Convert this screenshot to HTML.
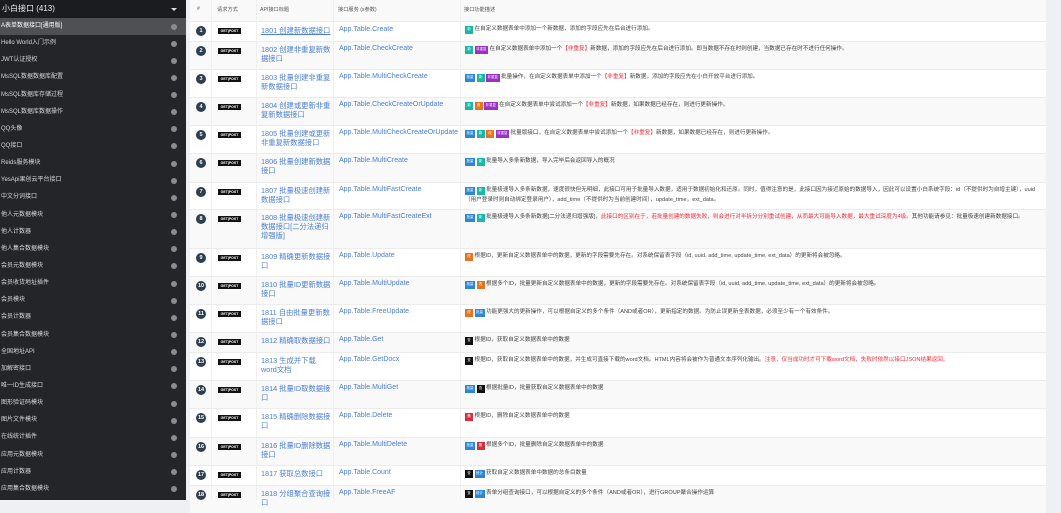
<!DOCTYPE html>
<html><head><meta charset="utf-8">
<style>
*{margin:0;padding:0;box-sizing:border-box}
body{width:1061px;height:500px;overflow:hidden;background:#eef0f3;font-family:"Liberation Sans","Noto Sans CJK SC",sans-serif;position:relative}
#sb{position:absolute;left:0;top:0;width:186px;height:500px;background:#232529;color:#d8d8d8}
#sb .hd{height:18px;background:#1b1c1f;color:#eee;font-size:8px;line-height:18px;padding-left:2px;position:relative}
#sb .hd:after{content:"";position:absolute;right:9px;top:8px;border-left:3px solid transparent;border-right:3px solid transparent;border-top:3px solid #ddd}
#sb .it{height:17.15px;font-size:6px;line-height:17px;padding-left:1px;position:relative;white-space:nowrap}
#sb .it.on{background:#4f5054;color:#fff}
#sb .it i{position:absolute;right:9px;top:5.5px;width:6px;height:6px;border-radius:3px;background:#8a8b8e}
#tb{position:absolute;left:190px;top:0;width:856px;height:500px;background:#fff}
.row{position:absolute;left:0;width:856px;border-top:1px solid #ececec}
.row.a{background:#f9f9f9}
.c{position:absolute;top:0;height:100%;border-left:1px solid #efefef}
.num{position:absolute;left:6px;width:10px;height:10px;border-radius:50%;background:#2c3e50;color:#fff;font-size:5.5px;line-height:10px;text-align:center;font-weight:bold}
.m{position:absolute;left:28px;width:23px;height:6px;background:#111;color:#fff;font-size:3.5px;line-height:6px;text-align:center;font-weight:bold}
.t{position:absolute;left:71px;width:70px;font-size:7.3px;line-height:9px;color:#4a7fd6}
.t.u{text-decoration:underline}
.s{position:absolute;left:149px;font-size:7px;color:#4a7fd6;white-space:nowrap}
.d{position:absolute;left:275px;width:575px;font-size:5.6px;line-height:9.5px;color:#444}
.b{display:inline-block;height:7.5px;min-width:8px;padding:0 1.5px;font-size:3.5px;line-height:7.5px;color:#fff;vertical-align:0;margin-right:1.5px;text-align:center}
.x{background:#1ab6a6}.p{background:#9b30c4}.l{background:#2d86d6}.o{background:#e8731f}.k{background:#111}.r{background:#d82d3c}
.red{color:#f02d3a}
.h{position:absolute;top:6px;font-size:5.2px;color:#555}
</style></head><body>
<div id="sb">
<div class="hd">小白接口 (413)</div>
<div class="it on">A表单数据接口[通用版]<i></i></div>
<div class="it">Hello World入门示例<i></i></div>
<div class="it">JWT认证授权<i></i></div>
<div class="it">MsSQL数据数据库配置<i></i></div>
<div class="it">MsSQL数据库存储过程<i></i></div>
<div class="it">MsSQL数据库数据操作<i></i></div>
<div class="it">QQ头像<i></i></div>
<div class="it">QQ接口<i></i></div>
<div class="it">Reids服务模块<i></i></div>
<div class="it">YesApi果创云平台接口<i></i></div>
<div class="it">中文分词接口<i></i></div>
<div class="it">他人元数据模块<i></i></div>
<div class="it">他人计数器<i></i></div>
<div class="it">他人集合数据模块<i></i></div>
<div class="it">会员元数据模块<i></i></div>
<div class="it">会员收货地址插件<i></i></div>
<div class="it">会员模块<i></i></div>
<div class="it">会员计数器<i></i></div>
<div class="it">会员集合数据模块<i></i></div>
<div class="it">全国地址API<i></i></div>
<div class="it">加解密接口<i></i></div>
<div class="it">唯一ID生成接口<i></i></div>
<div class="it">图形验证码模块<i></i></div>
<div class="it">图片文件模块<i></i></div>
<div class="it">在线统计插件<i></i></div>
<div class="it">应用元数据模块<i></i></div>
<div class="it">应用计数器<i></i></div>
<div class="it">应用集合数据模块<i></i></div>
</div>
<div id="tb">
<div class="row a" style="top:0;height:21px;border-top:none">
<span class="h" style="left:7px">#</span><span class="h" style="left:27px">请求方式</span><span class="h" style="left:70px">API接口标题</span><span class="h" style="left:148px">接口服务 (s参数)</span><span class="h" style="left:274px">接口功能描述</span>
</div>

<div class="row" style="top:21px;height:20px"><div class="num" style="top:4px">1</div><div class="m" style="top:6px">GET|POST</div><div class="t u" style="top:4px">1801 创建新数据接口</div><div class="s" style="top:4px">App.Table.Create</div><div class="d" style="top:3px"><span class="b x">新</span>在自定义数据表单中添加一个新数据，添加的字段应先在后台进行添加。</div></div>

<div class="row a" style="top:41px;height:28px"><div class="num" style="top:4px">2</div><div class="m" style="top:6px">GET|POST</div><div class="t" style="top:3px">1802 创建非重复新数据接口</div><div class="s" style="top:3px">App.Table.CheckCreate</div><div class="d" style="top:3px"><span class="b x">新</span><span class="b p">非重复</span>在自定义数据表单中添加一个<span class="red">【非重复】</span>新数据，添加的字段应先在后台进行添加。即当数据不存在时则创建，当数据已存在时不进行任何操作。</div></div>

<div class="row" style="top:69px;height:28px"><div class="num" style="top:4px">3</div><div class="m" style="top:6px">GET|POST</div><div class="t" style="top:3px">1803 批量创建非重复新数据接口</div><div class="s" style="top:3px">App.Table.MultiCheckCreate</div><div class="d" style="top:3px"><span class="b l">批量</span><span class="b x">新</span><span class="b p">非重复</span>批量操作，在自定义数据表单中添加一个<span class="red">【非重复】</span>新数据，添加的字段应先在小白开放平台进行添加。</div></div>

<div class="row a" style="top:97px;height:28px"><div class="num" style="top:4px">4</div><div class="m" style="top:6px">GET|POST</div><div class="t" style="top:3px">1804 创建或更新非重复新数据接口</div><div class="s" style="top:3px">App.Table.CheckCreateOrUpdate</div><div class="d" style="top:3px"><span class="b x">新</span><span class="b o">改</span><span class="b p">非重复</span>在自定义数据表单中尝试添加一个<span class="red">【非重复】</span>新数据，如果数据已经存在，则进行更新操作。</div></div>

<div class="row" style="top:125px;height:28px"><div class="num" style="top:4px">5</div><div class="m" style="top:6px">GET|POST</div><div class="t" style="top:3px">1805 批量创建或更新非重复新数据接口</div><div class="s" style="top:3px">App.Table.MultiCheckCreateOrUpdate</div><div class="d" style="top:3px"><span class="b l">批量</span><span class="b x">新</span><span class="b o">改</span><span class="b p">非重复</span>批量版接口，在自定义数据表单中尝试添加一个<span class="red">【非重复】</span>新数据，如果数据已经存在，则进行更新操作。</div></div>

<div class="row a" style="top:153px;height:29px"><div class="num" style="top:4px">6</div><div class="m" style="top:6px">GET|POST</div><div class="t" style="top:3px">1806 批量创建新数据接口</div><div class="s" style="top:3px">App.Table.MultiCreate</div><div class="d" style="top:3px"><span class="b l">批量</span><span class="b x">新</span>批量导入多条新数据，导入完毕后会返回导入的概况</div></div>

<div class="row" style="top:182px;height:27px"><div class="num" style="top:4px">7</div><div class="m" style="top:6px">GET|POST</div><div class="t" style="top:3px">1807 批量极速创建新数据接口</div><div class="s" style="top:3px">App.Table.MultiFastCreate</div><div class="d" style="top:3px"><span class="b l">批量</span><span class="b x">新</span>批量极速导入多条新数据，速度很快但无明细，此接口可用于批量导入数据，适用于数据初始化和还原。同时，值得注意的是，此接口因为接近原始的数据导入，因此可以设置小白系统字段：id（不提供时为自增主键），uuid（用户登录时则自动绑定登录用户），add_time（不提供时为当前创建时间），update_time，ext_data。</div></div>

<div class="row a" style="top:209px;height:39px"><div class="num" style="top:4px">8</div><div class="m" style="top:6px">GET|POST</div><div class="t" style="top:3px">1808 批量极速创建新数据接口[二分法递归增强版]</div><div class="s" style="top:3px">App.Table.MultiFastCreateExt</div><div class="d" style="top:3px"><span class="b l">批量</span><span class="b x">新</span>批量极速导入多条新数据[二分法递归增强版]，<span class="red">此接口的区别在于，若批量创建的数据失败，则会进行对半拆分分别重试创建，从而最大可能导入数据，最大重试深度为4级。</span>其他功能请参见：批量极速创建新数据接口。</div></div>

<div class="row" style="top:248px;height:28px"><div class="num" style="top:4px">9</div><div class="m" style="top:6px">GET|POST</div><div class="t" style="top:3px">1809 精确更新数据接口</div><div class="s" style="top:3px">App.Table.Update</div><div class="d" style="top:3px"><span class="b o">改</span>根据ID，更新自定义数据表单中的数据，更新的字段需要先存在。对系统保留表字段（id, uuid, add_time, update_time, ext_data）的更新将会被忽略。</div></div>

<div class="row a" style="top:276px;height:28px"><div class="num" style="top:4px">10</div><div class="m" style="top:6px">GET|POST</div><div class="t" style="top:3px">1810 批量ID更新数据接口</div><div class="s" style="top:3px">App.Table.MultiUpdate</div><div class="d" style="top:3px"><span class="b l">批量</span><span class="b o">改</span>根据多个ID，批量更新自定义数据表单中的数据，更新的字段需要先存在。对系统保留表字段（id, uuid, add_time, update_time, ext_data）的更新将会被忽略。</div></div>

<div class="row" style="top:304px;height:28px"><div class="num" style="top:4px">11</div><div class="m" style="top:6px">GET|POST</div><div class="t" style="top:3px">1811 自由批量更新数据接口</div><div class="s" style="top:3px">App.Table.FreeUpdate</div><div class="d" style="top:3px"><span class="b o">改</span><span class="b l">批量</span>功能更强大的更新操作，可以根据自定义的多个条件（AND或者OR），更新指定的数据。为防止误更新全表数据，必须至少有一个有效条件。</div></div>

<div class="row a" style="top:332px;height:20px"><div class="num" style="top:4px">12</div><div class="m" style="top:6px">GET|POST</div><div class="t" style="top:3px">1812 精确取数据接口</div><div class="s" style="top:3px">App.Table.Get</div><div class="d" style="top:3px"><span class="b k">查</span>根据ID，获取自定义数据表单中的数据</div></div>

<div class="row" style="top:352px;height:28px"><div class="num" style="top:4px">13</div><div class="m" style="top:6px">GET|POST</div><div class="t" style="top:3px">1813 生成并下载word文档</div><div class="s" style="top:3px">App.Table.GetDocx</div><div class="d" style="top:3px"><span class="b k">查</span>根据ID，获取自定义数据表单中的数据，并生成可直接下载的word文档。HTML内容将会被作为普通文本序列化输出。<span class="red">注意，仅当成功时才可下载word文档，失败时依然以接口JSON结果返回。</span></div></div>

<div class="row a" style="top:380px;height:28px"><div class="num" style="top:4px">14</div><div class="m" style="top:6px">GET|POST</div><div class="t" style="top:3px">1814 批量ID取数据接口</div><div class="s" style="top:3px">App.Table.MultiGet</div><div class="d" style="top:3px"><span class="b l">批量</span><span class="b k">查</span>根据批量ID，批量获取自定义数据表单中的数据</div></div>

<div class="row" style="top:408px;height:29px"><div class="num" style="top:4px">15</div><div class="m" style="top:6px">GET|POST</div><div class="t" style="top:3px">1815 精确删除数据接口</div><div class="s" style="top:3px">App.Table.Delete</div><div class="d" style="top:3px"><span class="b r">删</span>根据ID，删除自定义数据表单中的数据</div></div>

<div class="row a" style="top:437px;height:28px"><div class="num" style="top:4px">16</div><div class="m" style="top:6px">GET|POST</div><div class="t" style="top:3px">1816 批量ID删除数据接口</div><div class="s" style="top:3px">App.Table.MultiDelete</div><div class="d" style="top:3px"><span class="b l">批量</span><span class="b r">删</span>根据多个ID，批量删除自定义数据表单中的数据</div></div>

<div class="row" style="top:465px;height:20px"><div class="num" style="top:4px">17</div><div class="m" style="top:6px">GET|POST</div><div class="t" style="top:3px">1817 获取总数接口</div><div class="s" style="top:3px">App.Table.Count</div><div class="d" style="top:3px"><span class="b k">查</span><span class="b l">统计</span>获取自定义数据表单中数据的总条目数量</div></div>

<div class="row a" style="top:485px;height:28px"><div class="num" style="top:4px">18</div><div class="m" style="top:6px">GET|POST</div><div class="t" style="top:3px">1818 分组聚合查询接口</div><div class="s" style="top:3px">App.Table.FreeAF</div><div class="d" style="top:3px"><span class="b k">查</span><span class="b l">统计</span>表单分组查询接口，可以根据自定义的多个条件（AND或者OR），进行GROUP聚合操作运算</div></div>

<div class="c" style="left:21px"></div><div class="c" style="left:66px"></div><div class="c" style="left:143px"></div><div class="c" style="left:270px"></div>
</div>
</body></html>
